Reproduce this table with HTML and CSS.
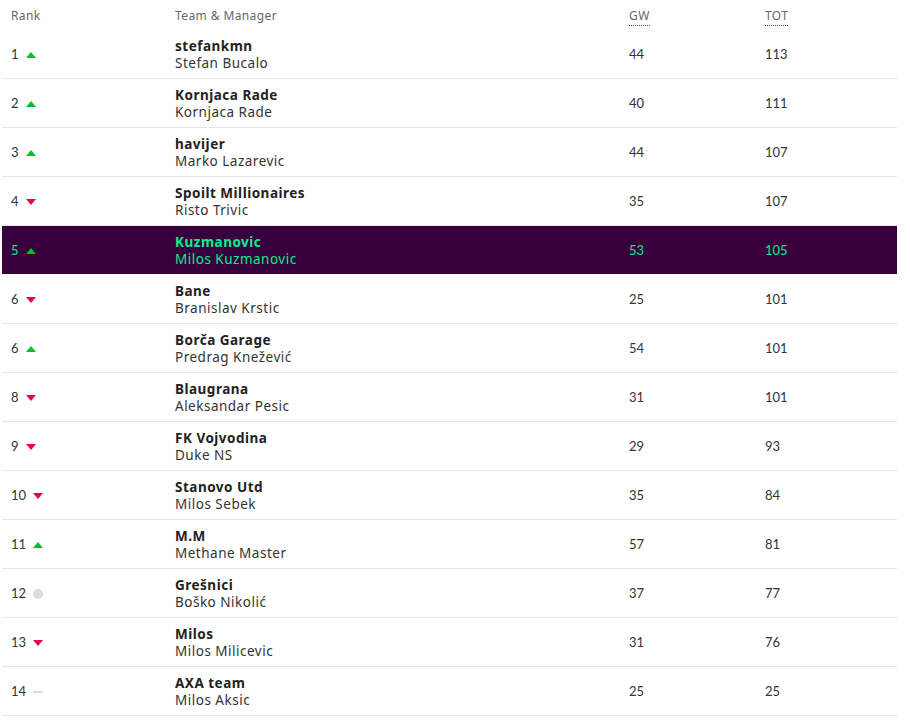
FILE: index.html
```html
<!DOCTYPE html>
<html>
<head>
<meta charset="utf-8">
<link rel="stylesheet" href="styles.css">
</head>
<body>
<div class="wrap">
<table class="standings">
  <thead>
    <tr>
      <th class="c-rank">Rank</th>
      <th class="c-team">Team &amp; Manager</th>
      <th class="c-gw"><abbr>GW</abbr></th>
      <th class="c-tot"><abbr>TOT</abbr></th>
    </tr>
  </thead>
  <tbody>
    <tr><td class="c-rank"><span class="num">1</span><span class="mv up"></span></td><td class="c-team"><div class="tn">stefankmn</div><div class="mn">Stefan Bucalo</div></td><td class="c-gw">44</td><td class="c-tot">113</td></tr>
    <tr><td class="c-rank"><span class="num">2</span><span class="mv up"></span></td><td class="c-team"><div class="tn">Kornjaca Rade</div><div class="mn">Kornjaca Rade</div></td><td class="c-gw">40</td><td class="c-tot">111</td></tr>
    <tr><td class="c-rank"><span class="num">3</span><span class="mv up"></span></td><td class="c-team"><div class="tn">havijer</div><div class="mn">Marko Lazarevic</div></td><td class="c-gw">44</td><td class="c-tot">107</td></tr>
    <tr><td class="c-rank"><span class="num">4</span><span class="mv down"></span></td><td class="c-team"><div class="tn">Spoilt Millionaires</div><div class="mn">Risto Trivic</div></td><td class="c-gw">35</td><td class="c-tot">107</td></tr>
    <tr class="mine"><td class="c-rank"><span class="num">5</span><span class="mv up"></span></td><td class="c-team"><div class="tn">Kuzmanovic</div><div class="mn">Milos Kuzmanovic</div></td><td class="c-gw">53</td><td class="c-tot">105</td></tr>
    <tr><td class="c-rank"><span class="num">6</span><span class="mv down"></span></td><td class="c-team"><div class="tn">Bane</div><div class="mn">Branislav Krstic</div></td><td class="c-gw">25</td><td class="c-tot">101</td></tr>
    <tr><td class="c-rank"><span class="num">6</span><span class="mv up"></span></td><td class="c-team"><div class="tn">Borča Garage</div><div class="mn">Predrag Knežević</div></td><td class="c-gw">54</td><td class="c-tot">101</td></tr>
    <tr><td class="c-rank"><span class="num">8</span><span class="mv down"></span></td><td class="c-team"><div class="tn">Blaugrana</div><div class="mn">Aleksandar Pesic</div></td><td class="c-gw">31</td><td class="c-tot">101</td></tr>
    <tr><td class="c-rank"><span class="num">9</span><span class="mv down"></span></td><td class="c-team"><div class="tn">FK Vojvodina</div><div class="mn">Duke NS</div></td><td class="c-gw">29</td><td class="c-tot">93</td></tr>
    <tr><td class="c-rank"><span class="num">10</span><span class="mv down"></span></td><td class="c-team"><div class="tn">Stanovo Utd</div><div class="mn">Milos Sebek</div></td><td class="c-gw">35</td><td class="c-tot">84</td></tr>
    <tr><td class="c-rank"><span class="num">11</span><span class="mv up"></span></td><td class="c-team"><div class="tn">M.M</div><div class="mn">Methane Master</div></td><td class="c-gw">57</td><td class="c-tot">81</td></tr>
    <tr><td class="c-rank"><span class="num">12</span><span class="mv same"></span></td><td class="c-team"><div class="tn">Grešnici</div><div class="mn">Boško Nikolić</div></td><td class="c-gw">37</td><td class="c-tot">77</td></tr>
    <tr><td class="c-rank"><span class="num">13</span><span class="mv down"></span></td><td class="c-team"><div class="tn">Milos</div><div class="mn">Milos Milicevic</div></td><td class="c-gw">31</td><td class="c-tot">76</td></tr>
    <tr><td class="c-rank"><span class="num">14</span><span class="mv new"></span></td><td class="c-team"><div class="tn">AXA team</div><div class="mn">Milos Aksic</div></td><td class="c-gw">25</td><td class="c-tot">25</td></tr>
  </tbody>
</table>
</div>
</body>
</html>
```
FILE: styles.css
```css
html, body {
  margin: 0;
  padding: 0;
  background: #fff;
}
.wrap {
  padding: 0 2px;
}
.standings {
  width: 895px;
  border-collapse: collapse;
  table-layout: fixed;
  font-family: "Lato", "Noto Sans", sans-serif;
  color: #333;
}
.standings th {
  height: 30px;
  padding: 0;
  text-align: left;
  font-weight: 400;
  font-size: 12px;
  letter-spacing: 0.4px;
  color: #666;
  vertical-align: middle;
  font-family: "Noto Sans", sans-serif;
}
.standings th abbr {
  text-decoration: none;
  border-bottom: 1px dotted #444;
  padding-bottom: 1px;
}
.standings td {
  height: 48px;
  padding: 0;
  border-bottom: 1px solid #e6e6e6;
  vertical-align: middle;
  font-size: 13px;
}
.c-rank { width: 173px; padding-left: 9px !important; box-sizing: border-box; }
.c-team { width: 454px; }
.c-gw { width: 136px; }
.c-tot { width: auto; }

.num {
  display: inline-block;
  font-size: 13px;
  color: #333;
}
.mv {
  display: inline-block;
  margin-left: 7px;
  vertical-align: middle;
  position: relative;
  top: -1px;
}
.mv.up {
  width: 0; height: 0;
  border-left: 5px solid transparent;
  border-right: 5px solid transparent;
  border-bottom: 6px solid #00c02a;
}
.mv.down {
  width: 0; height: 0;
  border-left: 5px solid transparent;
  border-right: 5px solid transparent;
  border-top: 6px solid #e90052;
}
.mv.same {
  width: 10px; height: 10px;
  border-radius: 50%;
  background: #dcdcdc;
}
.mv.new {
  width: 10px; height: 2px;
  background: #dcdcdc;
}
.tn, .mn {
  font-family: "Noto Sans", sans-serif;
  font-size: 13.5px;
  letter-spacing: 0.5px;
  line-height: 17px;
  color: #222;
}
.tn { font-weight: 700; margin-top: 2px; }
.mn { color: #333; }

.mine td {
  background: #37003c;
  color: #05f08c;
  border-bottom-color: #fff;
}
.mine .num, .mine .tn, .mine .mn { color: #05f08c; }
```
